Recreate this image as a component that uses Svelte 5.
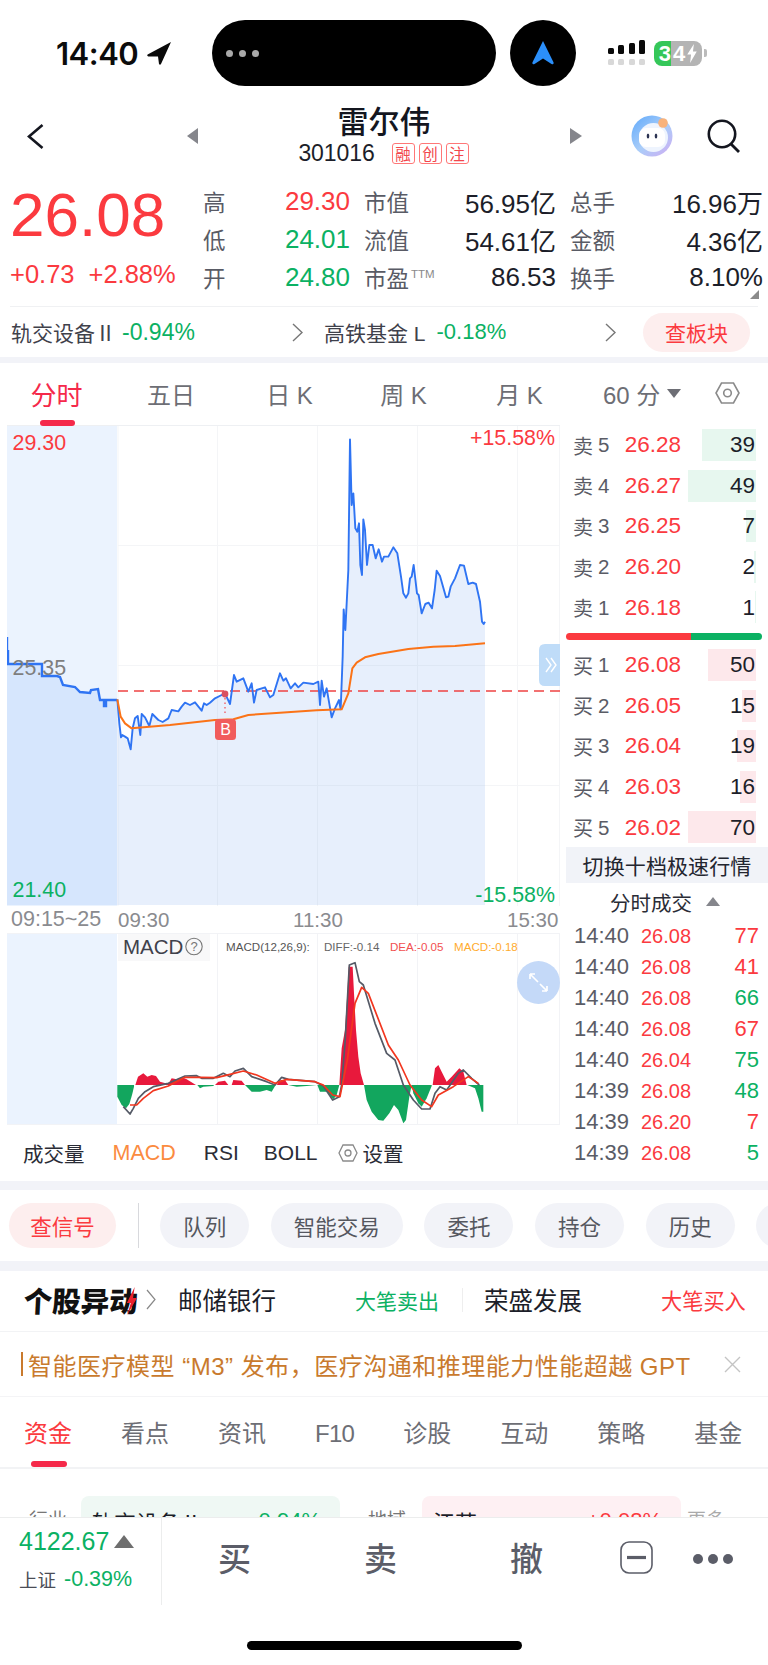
<script>
  const z9 = (a) => a.map(([x, y]) => `${320 + x / 3},${430 + y / 3}`);
  const z10 = (a) => a.map(([x, y]) => `${100 + x / 3},${640 + y / 3}`);
  const z11 = (a) => a.map(([x, y]) => `${110 + x / 3},${960 + y / 3}`).join(' ');

  const pre = '7,637 7,664 8,664 8,650 8,664 42,664 42,676 57,676 60,677 63,685 75,687 80,692 90,693 91,690 98,689 100,700 104,700 104,706 106,706 106,700 117,700';
  const preFill = pre + ' 117,905 7,905';

  const blueA = z10([[52,178],[58,250],[63,292],[67,285],[75,290],[83,295],[92,328],[98,265],[105,235],[113,228],[121,285],[125,222],[135,232],[148,258],[157,222],[175,240],[188,246],[205,235],[215,210],[235,214],[245,200],[255,188],[270,195],[285,187],[305,212],[312,190],[320,195],[330,188],[345,175],[365,165],[375,160],[390,192],[402,105],[410,125],[430,115],[445,155],[455,130],[462,188],[470,150],[495,142],[510,172],[520,165],[540,100],[550,122],[558,115],[572,145],[585,130],[595,142],[610,128],[640,132],[655,125],[660,195],[665,122],[672,170],[680,145],[695,232],[705,205],[717,180],[722,208]]);
  const blueB = z9([[68,680],[71,538],[76,600],[85,420],[90,28],[95,225],[100,190],[106,295],[112,305],[117,280],[121,405],[126,435],[130,268],[135,300],[141,405],[148,345],[158,345],[167,385],[176,358],[186,395],[192,380],[205,380],[220,352],[232,370],[243,440],[250,490],[258,503],[265,490],[270,445],[275,440],[281,405],[291,490],[296,495],[305,550],[316,522],[326,518],[336,535],[344,480],[350,422],[360,438],[378,502],[385,500],[392,470],[405,445],[420,405],[432,407],[445,462],[458,458],[468,462],[480,515],[486,575],[491,582],[495,575]]);
  const blue = [...blueA, ...blueB].join(' ');
  const blueFill = blue + ' 485,905 117.3,905';
  const orange = [...z10([[52,178],[62,230],[75,250],[95,265],[210,255],[345,240],[400,238],[445,225],[540,218],[650,211],[725,208]]), ...z9([[85,790],[97,715],[110,698],[135,682],[175,672],[265,657],[340,650],[405,648],[495,640]])].join(' ');

  const reds = [
    [[76,375],[84,350],[100,340],[112,350],[125,345],[138,348],[150,365],[175,372],[185,355],[200,358],[215,352],[230,358],[258,375]],
    [[315,375],[325,365],[345,362],[355,375]],
    [[365,375],[370,360],[395,362],[405,375]],
    [[500,375],[512,360],[525,360],[535,375]],
    [[688,375],[695,265],[705,210],[712,100],[716,20],[728,20],[732,100],[738,210],[745,290],[752,340],[762,375]],
    [[968,375],[975,325],[985,315],[995,335],[1010,365],[1025,350],[1048,325],[1060,335],[1070,375]]
  ].map(z11);
  const greens = [
    [[22,375],[22,410],[35,435],[48,445],[58,432],[66,405],[72,380],[72,375]],
    [[262,375],[270,385],[280,380],[310,378],[312,375]],
    [[405,375],[425,395],[450,395],[470,390],[485,395],[497,375]],
    [[535,375],[560,380],[590,378],[620,375]],
    [[622,375],[630,395],[650,395],[670,418],[680,405],[688,375]],
    [[762,375],[770,420],[785,455],[805,480],[820,482],[838,460],[852,435],[865,450],[880,490],[888,480],[898,410],[905,375]],
    [[905,375],[910,400],[925,430],[935,440],[950,415],[965,378],[965,375]],
    [[1072,375],[1095,385],[1105,415],[1115,455],[1120,455],[1120,375]]
  ].map(z11);
  const diff = z11([[40,440],[60,462],[70,445],[85,415],[105,395],[130,380],[175,370],[225,348],[260,347],[275,355],[310,355],[340,340],[360,350],[375,333],[400,325],[425,350],[470,365],[495,375],[515,352],[535,358],[615,365],[640,378],[668,420],[688,410],[695,375],[705,250],[718,15],[735,8],[748,65],[760,75],[795,190],[830,280],[855,300],[880,375],[910,420],[935,447],[960,447],[975,400],[990,380],[1010,390],[1045,340],[1060,330],[1085,355],[1108,375]]);
  const dea = z11([[60,435],[80,435],[100,415],[130,392],[175,378],[225,352],[270,352],[320,353],[360,343],[400,333],[440,345],[495,370],[530,358],[615,365],[640,375],[668,405],[690,410],[712,300],[735,130],[755,82],[775,100],[835,255],[865,300],[900,375],[935,420],[965,440],[985,405],[1030,380],[1075,350],[1105,370]]);

  const stats = [
    ['高', '29.30', 'red', '市值', '56.95亿', '总手', '16.96万'],
    ['低', '24.01', 'green', '流值', '54.61亿', '金额', '4.36亿'],
    ['开', '24.80', 'green', '市盈', '86.53', '换手', '8.10%']
  ];
  const sells = [['卖', 5, '26.28', 39, 54], ['卖', 4, '26.27', 49, 68], ['卖', 3, '26.25', 7, 10], ['卖', 2, '26.20', 2, 2], ['卖', 1, '26.18', 1, 1]];
  const buys = [['买', 1, '26.08', 50, 48], ['买', 2, '26.05', 15, 14], ['买', 3, '26.04', 19, 19], ['买', 4, '26.03', 16, 16], ['买', 5, '26.02', 70, 68]];
  const ticks = [
    ['14:40', '26.08', 77, 'red'], ['14:40', '26.08', 41, 'red'], ['14:40', '26.08', 66, 'green'], ['14:40', '26.08', 67, 'red'],
    ['14:40', '26.04', 75, 'green'], ['14:39', '26.08', 48, 'green'], ['14:39', '26.20', 7, 'red'], ['14:39', '26.08', 5, 'green']
  ];
  const pills = ['队列', '智能交易', '委托', '持仓', '历史', ''];
  const tabs2 = ['资金', '看点', '资讯', 'F10', '诊股', '互动', '策略', '基金'];
</script>

<div class="page">
  <header class="status">
    <span class="time">14:40</span>
    <svg class="loc" viewBox="0 0 24 23"><path d="M24 0 L0.6 12.6 Q-0.4 14 1.4 14.4 L11 14.6 L12 22 Q13 23.4 14 22 Z" fill="#0a0a0a"/></svg>
    <div class="island">
      <i></i><i></i><i></i>
    </div>
    <div class="circle">
      <svg viewBox="0 0 22 24" class="nav-arrow"><path d="M11 0 L21.6 21.5 Q22 24 19.5 23 L11 17.5 L2.5 23 Q0 24 0.4 21.5 Z" fill="#2b8ffa"/></svg>
    </div>
    <svg class="signal" viewBox="0 0 38 26">
      <rect x="0" y="8" width="6" height="6" rx="1.5"/><rect x="10" y="5" width="6" height="9" rx="1.5"/><rect x="21" y="3" width="6" height="11" rx="1.5"/><rect x="31" y="0" width="6" height="14" rx="1.5"/>
      <g fill="#d8d8d8"><rect x="0" y="19" width="6" height="6" rx="1.5"/><rect x="10" y="19" width="6" height="6" rx="1.5"/><rect x="21" y="19" width="6" height="6" rx="1.5"/><rect x="31" y="19" width="6" height="6" rx="1.5"/></g>
    </svg>
    <div class="battery">
      <span class="b-green">3</span><span class="b-rest">4<svg viewBox="0 0 10 20" class="bolt"><path d="M7 0 L0 11 L4 11 L3 20 L10 8 L6 8 Z" fill="#fff"/></svg></span>
    </div>
    <span class="nub"></span>
  </header>

  <nav class="nav">
    <svg class="back" viewBox="0 0 17 25"><path d="M15.5 1 L2 12.5 L15.5 24" fill="none" stroke="#14161f" stroke-width="2.6"/></svg>
    <span class="tri-l"></span>
    <div class="title">
      <h1>雷尔伟</h1>
      <div class="code"><span class="num">301016</span><b>融</b><b>创</b><b>注</b></div>
    </div>
    <span class="tri-r"></span>
    <svg class="mascot" viewBox="0 0 42 42">
      <defs><linearGradient id="mg" x1="0" y1="0" x2="0.9" y2="1"><stop offset="0" stop-color="#5fa9fb"/><stop offset=".55" stop-color="#a9cdf9"/><stop offset="1" stop-color="#cdb0f3"/></linearGradient></defs>
      <circle cx="21" cy="21" r="20.5" fill="url(#mg)"/>
      <circle cx="22.5" cy="22.5" r="14.5" fill="#eef4fe"/>
      <rect x="8" y="13" width="26" height="19" rx="7" fill="#fff"/>
      <ellipse cx="17" cy="21" rx="1.3" ry="2.5" fill="#2b3352"/><ellipse cx="25" cy="21" rx="1.3" ry="2.5" fill="#2b3352"/>
      <circle cx="32" cy="8" r="4.8" fill="#f8b27c"/>
    </svg>
    <svg class="search" viewBox="0 0 33 34"><circle cx="15" cy="15" r="13.2" fill="none" stroke="#14161f" stroke-width="2.6"/><path d="M24 25 L32 33" stroke="#14161f" stroke-width="2.8"/></svg>
  </nav>

  <section class="quote">
    <div class="big">
      <div class="last">26.08</div>
      <div class="chg"><span>+0.73</span><span>+2.88%</span></div>
    </div>
    <div class="stats">
      {#each stats as s}
        <div class="cell"><span class="lab">{s[0]}</span><span class={s[2]}>{s[1]}</span></div>
        <div class="cell"><span class="lab">{s[3]}{#if s[3] === '市盈'}<sup>TTM</sup>{/if}</span><span>{s[4]}</span></div>
        <div class="cell"><span class="lab">{s[5]}</span><span>{s[6]}</span></div>
      {/each}
      <span class="corner"></span>
    </div>
  </section>

  <section class="sector">
    <div class="sec one"><span class="name">轨交设备Ⅱ</span><span class="green">-0.94%</span></div>
    <svg class="chev" viewBox="0 0 11 19"><path d="M1 1 L10 9.5 L1 18" fill="none" stroke="#777" stroke-width="1.4"/></svg>
    <div class="sec two"><span class="name">高铁基金 L</span><span class="green">-0.18%</span></div>
    <svg class="chev" viewBox="0 0 11 19"><path d="M1 1 L10 9.5 L1 18" fill="none" stroke="#777" stroke-width="1.4"/></svg>
    <span class="plate">查板块</span>
  </section>
  <div class="band b1"></div>

  <div class="ktabs">
    <span class="on">分时</span><span>五日</span><span>日 K</span><span>周 K</span><span>月 K</span>
    <div class="kmore">
      <span>60 分</span><i class="down"></i>
      <svg class="hex" viewBox="0 0 25 22"><path d="M6.5 1 H18.5 L24 11 L18.5 21 H6.5 L1 11 Z" fill="none" stroke="#8a8a8a" stroke-width="1.6"/><circle cx="12.5" cy="11" r="3.8" fill="none" stroke="#8a8a8a" stroke-width="1.6"/></svg>
    </div>
  </div>

  <main class="market">
    <div class="charts">
      <div class="chartbox">
        <svg class="main" viewBox="7 425 553 481">
          <rect x="7" y="426" width="110" height="480" fill="#ebf3fe"/>
          <polygon points={preFill} fill="#d6e6fd"/>
          <polygon points={blueFill} fill="#e7effc"/>
          <path d="M7 425.5 H560" stroke="#eef0f3"/>
          <g stroke="#9aa5b8" stroke-width="1" opacity=".1">
            <path d="M118 545.5 H560 M118 665.5 H560 M118 785.5 H560"/>
            <path d="M217.5 426 V906 M317.5 426 V906 M417.5 426 V906 M517.5 426 V906 M118 426 V906 M559.5 426 V906"/>
          </g>
          <polyline points={pre} fill="none" stroke="#2f74f3" stroke-width="2.4"/>
          <path d="M118 691 H560" stroke="#ee4343" stroke-width="1.6" stroke-dasharray="10 6"/>
          <polyline points={blue} fill="none" stroke="#2f74f3" stroke-width="1.9" stroke-linejoin="round"/>
          <polyline points={orange} fill="none" stroke="#fb7317" stroke-width="2" stroke-linejoin="round"/>
          <circle cx="225" cy="694" r="3.4" fill="#d9505f"/>
          <path d="M225 698 V716" stroke="#f0606a" stroke-width="1.4" stroke-dasharray="1.5 3"/>
          <rect x="215" y="719" width="21" height="21" rx="3.5" fill="#f15c5c"/>
          <text x="225.5" y="735" class="b" text-anchor="middle">B</text>
          <text x="12.5" y="450" class="axis red-f">29.30</text>
          <text x="12.5" y="674.5" class="axis gray-f">25.35</text>
          <text x="12.5" y="896.5" class="axis green-f">21.40</text>
          <text x="555" y="445" class="axis red-f" text-anchor="end">+15.58%</text>
          <text x="555" y="902" class="axis green-f" text-anchor="end">-15.58%</text>
          <path d="M539 644 H560 V686 H545 Q539 686 539 680 V650 Q539 644 545 644 Z" fill="#bfdcf8"/>
          <path d="M546 658 L551 665 L546 672 M551 658 L556 665 L551 672" fill="none" stroke="#fff" stroke-width="1.4"/>
        </svg>
      </div>
      <div class="xlabels">
        <span class="x0">09:15~25</span><span class="x1">09:30</span><span class="x2">11:30</span><span class="x3">15:30</span>
      </div>
      <svg class="macd" viewBox="7 933 553 192">
        <rect x="7" y="933" width="110" height="191" fill="#ebf3fe"/>
        <g stroke="#f2f3f6" stroke-width="1">
          <path d="M7 933.5 H560 M7 1124.5 H560"/>
          <path d="M217.5 933 V1124 M317.5 933 V1124 M417.5 933 V1124 M517.5 933 V1124 M559.5 933 V1124"/>
        </g>
        <rect x="118" y="934" width="92" height="27" fill="#f8f8f9"/>
        <text x="123" y="953.5" class="mlabel">MACD</text>
        <circle cx="194" cy="946.5" r="8.2" fill="none" stroke="#777" stroke-width="1.1"/>
        <text x="194" y="951" class="q" text-anchor="middle">?</text>
        <text x="226" y="951" class="lg" fill="#555">MACD(12,26,9):</text>
        <text x="324" y="951" class="lg" fill="#666">DIFF:-0.14</text>
        <text x="390" y="951" class="lg" fill="#f25050">DEA:-0.05</text>
        <text x="454" y="951" class="lg" fill="#ffab2e">MACD:-0.18</text>
        {#each reds as p}<polygon points={p} fill="#e8193c"/>{/each}
        {#each greens as p}<polygon points={p} fill="#12a65e"/>{/each}
        <polyline points={diff} fill="none" stroke="#555a66" stroke-width="1.7" stroke-linejoin="round"/>
        <polyline points={dea} fill="none" stroke="#f2361f" stroke-width="1.7" stroke-linejoin="round"/>
        <circle cx="538.5" cy="982.5" r="21.5" fill="#c4d9f8"/>
        <path d="M530 974 L535 974 M530 974 L530 979 M530 974 L538 982 M547 991 L542 991 M547 991 L547 986 M547 991 L540 984" fill="none" stroke="#fff" stroke-width="1.7"/>
      </svg>
      <div class="inds">
        <span class="i0">成交量</span><span class="i1">MACD</span><span class="i2">RSI</span><span class="i3">BOLL</span>
        <svg class="hex2" viewBox="0 0 20 18"><path d="M5 1 H15 L19 9 L15 17 H5 L1 9 Z" fill="none" stroke="#8a8a8a" stroke-width="1.3"/><circle cx="10" cy="9" r="3" fill="none" stroke="#8a8a8a" stroke-width="1.3"/></svg>
        <span class="i4">设置</span>
      </div>
    </div>

    <aside class="side">
      <div class="book">
        {#each sells as r}
          <div class="ob">
            <i class="qbar gbar" style="width:{r[4]}px"></i>
            <span class="ol">{r[0]}<em>{r[1]}</em></span><span class="op">{r[2]}</span><span class="oq">{r[3]}</span>
          </div>
        {/each}
        <div class="ratio"><i></i></div>
        {#each buys as r}
          <div class="ob">
            <i class="qbar rbar" style="width:{r[4]}px"></i>
            <span class="ol">{r[0]}<em>{r[1]}</em></span><span class="op">{r[2]}</span><span class="oq">{r[3]}</span>
          </div>
        {/each}
      </div>
      <div class="switch">切换十档极速行情</div>
      <div class="thead"><span>分时成交</span><i></i></div>
      {#each ticks as t}
        <div class="tick"><span class="tt">{t[0]}</span><span class="tp">{t[1]}</span><span class="tv {t[3]}">{t[2]}</span></div>
      {/each}
    </aside>
  </main>
  <div class="band b2"></div>

  <div class="actions">
    <span class="sig">查信号</span>
    <span class="vr"></span>
    {#each pills as p}<span class="pill" class:stub={!p}>{p}</span>{/each}
  </div>
  <div class="band b3"></div>

  <div class="movers">
    <div class="logo">个股异动<svg class="bolt2" viewBox="0 0 10 28"><path d="M7 0 L0 16 L4 16 L1 28 L10 11 L6 11 Z" fill="#e8222e"/></svg></div>
    <svg class="chev3" viewBox="0 0 10 21"><path d="M1 1 L9 10.5 L1 20" fill="none" stroke="#888" stroke-width="1.2"/></svg>
    <span class="m1">邮储银行</span>
    <span class="m2 green">大笔卖出</span>
    <span class="vr2"></span>
    <span class="m3">荣盛发展</span>
    <span class="m4 red">大笔买入</span>
  </div>

  <div class="ticker">
    <i class="barline"></i>
    <span class="tk">智能医疗模型 “M3” 发布，医疗沟通和推理能力性能超越 GPT</span>
    <svg class="close" viewBox="0 0 17 17"><path d="M1 1 L16 16 M16 1 L1 16" stroke="#c4c4c4" stroke-width="1.4"/></svg>
  </div>

  <div class="dtabs">
    {#each tabs2 as t, i}<span class:active={i === 0} class:f={t === 'F10'}>{t}</span>{/each}
  </div>

  <div class="peek">
    <span class="pl l1">行业</span>
    <div class="card gcard"><span>轨交设备Ⅱ</span><span class="green">-0.94%</span></div>
    <span class="pl l2">地域</span>
    <div class="card rcard"><span>江苏</span><span class="red">+0.08%</span></div>
    <span class="pl l3">更多</span>
  </div>

  <footer class="bottom">
    <div class="idx">
      <div class="i-a"><span class="green">4122.67</span><i></i></div>
      <div class="i-b"><span class="sh">上证</span><span class="green">-0.39%</span></div>
    </div>
    <span class="act a1">买</span><span class="act a2">卖</span><span class="act a3">撤</span>
    <svg class="minus" viewBox="0 0 33 33"><rect x="1" y="1" width="31" height="31" rx="8" fill="none" stroke="#5b5d68" stroke-width="1.6"/><path d="M7 16.5 H26" stroke="#5b5d68" stroke-width="3.2"/></svg>
    <div class="dots"><i></i><i></i><i></i></div>
  </footer>
  <div class="homebar"><i></i></div>
</div>

<style>
  :global(body) { margin: 0; background: #fff; }
  .page {
    width: 768px; height: 1665px; overflow: hidden; background: #fff; color: #1c1e29;
    font-family: "Liberation Sans", "Noto Sans CJK SC", sans-serif;
  }
  i, em { font-style: normal; display: block; }
  .red { color: #fb3a3f; }
  .green { color: #0bb163; }

  .status { height: 106px; display: flex; align-items: center; }
  .time { margin-left: 56px; font: 600 31px Inter, sans-serif; letter-spacing: -.5px; width: 86px; color: #0c0c0c; white-space: nowrap; }
  .loc { width: 24px; height: 23px; margin-left: 5px; }
  .island { margin-left: 41px; width: 284px; height: 66px; border-radius: 33px; background: #000; display: flex; align-items: center; gap: 6px; padding-left: 14px; box-sizing: border-box; }
  .island i { width: 7px; height: 7px; border-radius: 50%; background: #a9a9a9; }
  .circle { margin-left: 14px; width: 66px; height: 66px; border-radius: 50%; background: #000; display: flex; align-items: center; justify-content: center; }
  .nav-arrow { width: 22px; height: 24px; }
  .signal { margin-left: 32px; width: 38px; height: 26px; fill: #0a0a0a; }
  .battery { margin-left: 8px; width: 48px; height: 25px; border-radius: 8px; overflow: hidden; display: flex; font: 700 22px/25px "Liberation Sans", sans-serif; color: #fff; }
  .b-green { width: 17px; background: #35c759; text-align: right; }
  .b-rest { flex: 1; background: #b4b4b4; display: flex; align-items: center; padding-left: 2px; }
  .bolt { width: 10px; height: 19px; margin-left: 2px; }
  .nub { width: 3px; height: 8px; margin-left: 2px; background: #bbb; border-radius: 0 2px 2px 0; }

  .nav { height: 66px; display: flex; align-items: center; padding-left: 27px; }
  .back { width: 17px; height: 25px; margin-top: -6px; }
  .tri-l { width: 0; height: 0; margin-left: 143px; margin-top: -6px; border: 8px solid transparent; border-left: 0; border-right: 11px solid #85868c; }
  .tri-r { width: 0; height: 0; margin-top: -6px; border: 8px solid transparent; border-right: 0; border-left: 12px solid #85868c; }
  .title { width: 372px; align-self: flex-start; display: flex; flex-direction: column; align-items: center; }
  h1 { margin: 0 0 8px; font: 500 31px/28px "Noto Sans CJK SC", sans-serif; color: #14161f; }
  .code { display: flex; align-items: center; height: 23px; margin-left: -1px; }
  .num { font-size: 23px; margin-right: 17px; letter-spacing: -.1px; }
  .code b { width: 23px; height: 21px; box-sizing: border-box; border: 1px solid #f77; border-radius: 3px; color: #f2474c; font: 400 15.5px/19px "Noto Sans CJK SC", sans-serif; text-align: center; margin-right: 4px; }
  .code b:last-child { margin-right: 0; }
  .mascot { width: 42px; height: 42px; margin-left: 49px; margin-top: -6px; }
  .search { width: 33px; height: 34px; margin-left: 34px; margin-top: -6px; }

  .quote { height: 134px; display: flex; align-items: flex-start; padding-left: 10px; position: relative; }
  .big { width: 193px; }
  .last { font-size: 62px; line-height: 70px; margin-top: 8px; color: #fb3a3f; }
  .chg { display: flex; gap: 14px; font-size: 25.5px; line-height: 30px; color: #fb3a3f; margin-top: 9px; white-space: nowrap; }
  .stats { display: grid; grid-template-columns: 147px 192px 193px; column-gap: 14px; grid-auto-rows: 38px; font-size: 26px; margin-top: 10px; }
  .cell { display: flex; justify-content: space-between; align-items: center; white-space: nowrap; }
  .lab { font: 400 22.5px "Noto Sans CJK SC", sans-serif; color: #595b65; }
  sup { font: 400 11.5px "Liberation Sans", sans-serif; color: #8a8a8a; vertical-align: 9px; margin-left: 2px; }
  .corner { position: absolute; right: 9px; top: 118px; width: 0; height: 0; border-left: 9px solid transparent; border-bottom: 9px solid #8b8b8b; }

  .sector { margin: 0 10px; height: 51px; border-top: 1px solid #f0f1f3; display: flex; align-items: center; font-size: 22px; box-sizing: border-box; }
  .sec { display: flex; align-items: center; gap: 11px; white-space: nowrap; }
  .name { font: 400 21px "Liberation Sans", "Noto Sans CJK SC", sans-serif; color: #3f414b; }
  .one { width: 282px; padding-left: 1px; box-sizing: border-box; gap: 6px; font-size: 23px; }
  .two { margin-left: 21px; width: 281px; }
  .chev { width: 11px; height: 19px; }
  .plate { margin-left: 27px; width: 107px; height: 39px; border-radius: 20px; background: #fdeeee; color: #fb3a3f; font: 400 21px/39px "Noto Sans CJK SC", sans-serif; text-align: center; }
  .band { background: #f2f3f8; }
  .b1 { height: 6px; }
  .b2 { height: 9px; }
  .b3 { height: 10px; }

  .ktabs { height: 62px; display: grid; grid-template-columns: 113px 116px 121px 107px 125px 1fr; align-items: center; font: 400 24px "Liberation Sans", "Noto Sans CJK SC", sans-serif; color: #6d6e75; text-align: center; position: relative; white-space: nowrap; }
  .ktabs > span { margin-top: -2px; }
  .ktabs .on { color: #f5294a; font-size: 26px; position: relative; }
  .ktabs .on::after { content: ""; position: absolute; left: 40px; top: 45px; width: 35px; height: 6px; border-radius: 3px; background: #f5294a; }
  .kmore { display: flex; align-items: center; padding-left: 21px; margin-top: -2px; }
  .down { width: 0; height: 0; margin-left: 7px; border: 7px solid transparent; border-bottom: 0; border-top: 9px solid #6d6e75; }
  .hex { width: 25px; height: 22px; margin-left: 34px; }

  .market { display: flex; height: 756px; }
  .charts { width: 560px; padding-left: 7px; box-sizing: border-box; }
  .chartbox { height: 481px; }
  .main { display: block; width: 553px; height: 481px; }
  .axis { font: 400 21.4px "Liberation Sans", sans-serif; }
  .red-f { fill: #fb3a3f; }
  .green-f { fill: #0bb163; }
  .gray-f { fill: #7e7e7e; }
  .b { font: 400 16px "Liberation Sans", sans-serif; fill: #fff; }
  .mlabel { font: 400 20.5px "Liberation Sans", sans-serif; fill: #3f414b; }
  .q { font: 400 13px "Liberation Sans", sans-serif; fill: #777; }
  .lg { font: 400 11.6px "Liberation Sans", sans-serif; }
  .xlabels { height: 27px; display: flex; align-items: center; font-size: 20.5px; color: #8a8b8f; white-space: nowrap; }
  .x0 { margin-left: 4px; width: 107px; font-size: 21.5px; }
  .x1 { width: 175px; }
  .x2 { width: 214px; }
  .macd { display: block; width: 553px; height: 192px; }
  .inds { height: 56px; display: flex; align-items: center; font: 400 21px "Noto Sans CJK SC", "Liberation Sans", sans-serif; color: #2a2c36; }
  .i0 { margin-left: 16px; font-size: 20.5px; }
  .i1 { margin-left: 28px; color: #fb8b3f; font-family: "Liberation Sans", sans-serif; font-size: 21.5px; }
  .i2 { margin-left: 28px; font-family: "Liberation Sans", sans-serif; font-size: 21px; }
  .i3 { margin-left: 25px; font-family: "Liberation Sans", sans-serif; font-size: 21px; }
  .hex2 { width: 20px; height: 18px; margin-left: 20px; }
  .i4 { margin-left: 5px; font-size: 20.5px; }

  .side { width: 208px; }
  .book { margin-left: 6px; width: 196px; }
  .ob { position: relative; height: 40.6px; width: 190px; display: flex; align-items: center; font-size: 22.5px; padding-left: 7px; box-sizing: border-box; }
  .qbar { position: absolute; right: 0; top: 4px; height: 32px; }
  .gbar { background: #e7f7ef; }
  .rbar { background: #fde8eb; }
  .ol { position: relative; width: 34px; font: 400 20px "Noto Sans CJK SC", sans-serif; color: #5a5c66; display: flex; align-items: center; white-space: nowrap; }
  .ol em { font: 400 20.5px "Liberation Sans", sans-serif; margin-left: 5px; }
  .op { position: relative; width: 74px; text-align: right; color: #fb3a3f; }
  .oq { position: relative; flex: 1; text-align: right; padding-right: 1px; }
  .ratio { height: 17px; display: flex; align-items: center; }
  .ratio i { width: 196px; height: 7px; border-radius: 4px; background: linear-gradient(90deg, #fb3a3f 0 125px, #0bb163 125px); }
  .switch { margin-left: 6px; height: 36px; margin-top: -1px; background: #f1f3f8; font: 400 21px/36px "Noto Sans CJK SC", sans-serif; text-align: center; color: #23252f; letter-spacing: 0.1px; }
  .thead { height: 38px; display: flex; align-items: center; padding-left: 50px; font: 400 20.5px "Noto Sans CJK SC", sans-serif; color: #2a2c36; }
  .thead i { width: 0; height: 0; margin-left: 14px; border: 7px solid transparent; border-top: 0; border-bottom: 9px solid #85868c; }
  .tick { height: 31px; display: flex; align-items: center; padding-left: 14px; font-size: 22px; }
  .tt { width: 67px; color: #5a5c66; }
  .tp { width: 60px; font-size: 20px; color: #fb3a3f; }
  .tv { width: 58px; text-align: right; }

  .actions { height: 71px; display: flex; align-items: center; padding-left: 9px; gap: 21.6px; overflow: hidden; box-sizing: border-box; }
  .sig { flex: none; width: 107px; height: 45px; border-radius: 23px; background: #fdeeee; color: #fb3a3f; font: 400 21.5px/45px "Noto Sans CJK SC", sans-serif; text-align: center; }
  .vr { flex: none; width: 1px; height: 45px; background: #d8d9dd; }
  .pill { flex: none; height: 45px; padding: 0 23px; border-radius: 23px; background: #f2f3f8; color: #55575f; font: 400 21.5px/45px "Noto Sans CJK SC", sans-serif; }
  .stub { width: 40px; }

  .movers { height: 61px; display: flex; align-items: center; border-bottom: 1px solid #f2f3f5; font: 400 24.5px "Noto Sans CJK SC", sans-serif; box-sizing: border-box; padding-bottom: 3px; white-space: nowrap; }
  .logo { position: relative; margin-left: 24px; font: 900 28.5px "Noto Sans CJK SC", sans-serif; width: 114px; color: #111; white-space: nowrap; transform: skewX(-3deg); }
  .bolt2 { position: absolute; right: 1px; top: 8px; width: 10px; height: 28px; }
  .chev3 { width: 10px; height: 21px; margin-left: 8px; }
  .m1 { margin-left: 22px; width: 177px; }
  .m2 { width: 107px; font-size: 21px; }
  .vr2 { width: 1px; height: 24px; background: #eee; }
  .m3 { margin-left: 21px; width: 177px; }
  .m4 { font-size: 21.2px; }

  .ticker { height: 65px; display: flex; align-items: center; border-bottom: 1px solid #f4f4f6; box-sizing: border-box; color: #c97a2d; padding-left: 21px; }
  .barline { width: 2px; height: 24px; background: #c97a2d; margin-right: 5px; }
  .tk { font: 400 24px "Liberation Sans", "Noto Sans CJK SC", sans-serif; letter-spacing: .5px; white-space: nowrap; width: 696px; overflow: hidden; }
  .close { width: 17px; height: 17px; }

  .dtabs { height: 72px; display: flex; align-items: flex-start; gap: 49px; padding-left: 24px; padding-top: 20px; box-sizing: border-box; border-bottom: 2px solid #f2f3f5; font: 400 24px/33px "Liberation Sans", "Noto Sans CJK SC", sans-serif; color: #6d6e75; }
  .dtabs span { white-space: nowrap; position: relative; }
  .dtabs .f { letter-spacing: -.7px; }
  .dtabs .active { color: #fb3a3f; }
  .dtabs .active::after { content: ""; position: absolute; left: 7px; top: 44px; width: 36px; height: 6px; border-radius: 3px; background: #f5294a; }

  .peek { height: 48px; overflow: hidden; display: flex; align-items: flex-start; padding-top: 27px; box-sizing: border-box; font: 400 22px "Liberation Sans", "Noto Sans CJK SC", sans-serif; }
  .pl { font-size: 19px; color: #777; line-height: 50px; }
  .l1 { margin-left: 29px; width: 52px; }
  .l2 { margin-left: 28px; width: 54px; }
  .l3 { margin-left: 6px; color: #aaa; }
  .card { flex: none; width: 259px; height: 50px; border-radius: 8px; display: flex; align-items: center; justify-content: space-between; padding: 0 19px 0 11px; box-sizing: border-box; font-size: 22px; }
  .gcard { background: #eff8f4; }
  .rcard { background: #fef0f3; }

  .bottom { height: 88px; border-top: 1px solid #eceded; display: flex; align-items: center; box-sizing: border-box; }
  .idx { height: 87px; padding-left: 19px; border-right: 1px solid #eceded; flex: none; width: 142px; }
  .i-a { display: flex; align-items: center; font-size: 25px; height: 46px; }
  .i-a i { margin-left: 5px; width: 0; height: 0; border: 10px solid transparent; border-top: 0; border-bottom: 13px solid #6e6e6e; }
  .i-b { display: flex; align-items: center; font-size: 21.5px; height: 30px; gap: 8px; }
  .sh { font: 400 18.5px "Noto Sans CJK SC", sans-serif; color: #4b4d56; }
  .act { font: 500 33px "Noto Sans CJK SC", sans-serif; color: #5b5d68; margin-top: -10px; }
  .a1 { margin-left: 56px; }
  .a2 { margin-left: 113px; }
  .a3 { margin-left: 113px; }
  .minus { width: 33px; height: 33px; margin-left: 77px; margin-top: -8px; }
  .dots { display: flex; gap: 5px; margin-left: 40px; margin-top: -6px; }
  .dots i { width: 10px; height: 10px; border-radius: 50%; background: #5b5d68; }
  .homebar { height: 60px; display: flex; justify-content: center; }
  .homebar i { width: 275px; height: 9px; border-radius: 5px; background: #000; margin-top: 36px; }
</style>
